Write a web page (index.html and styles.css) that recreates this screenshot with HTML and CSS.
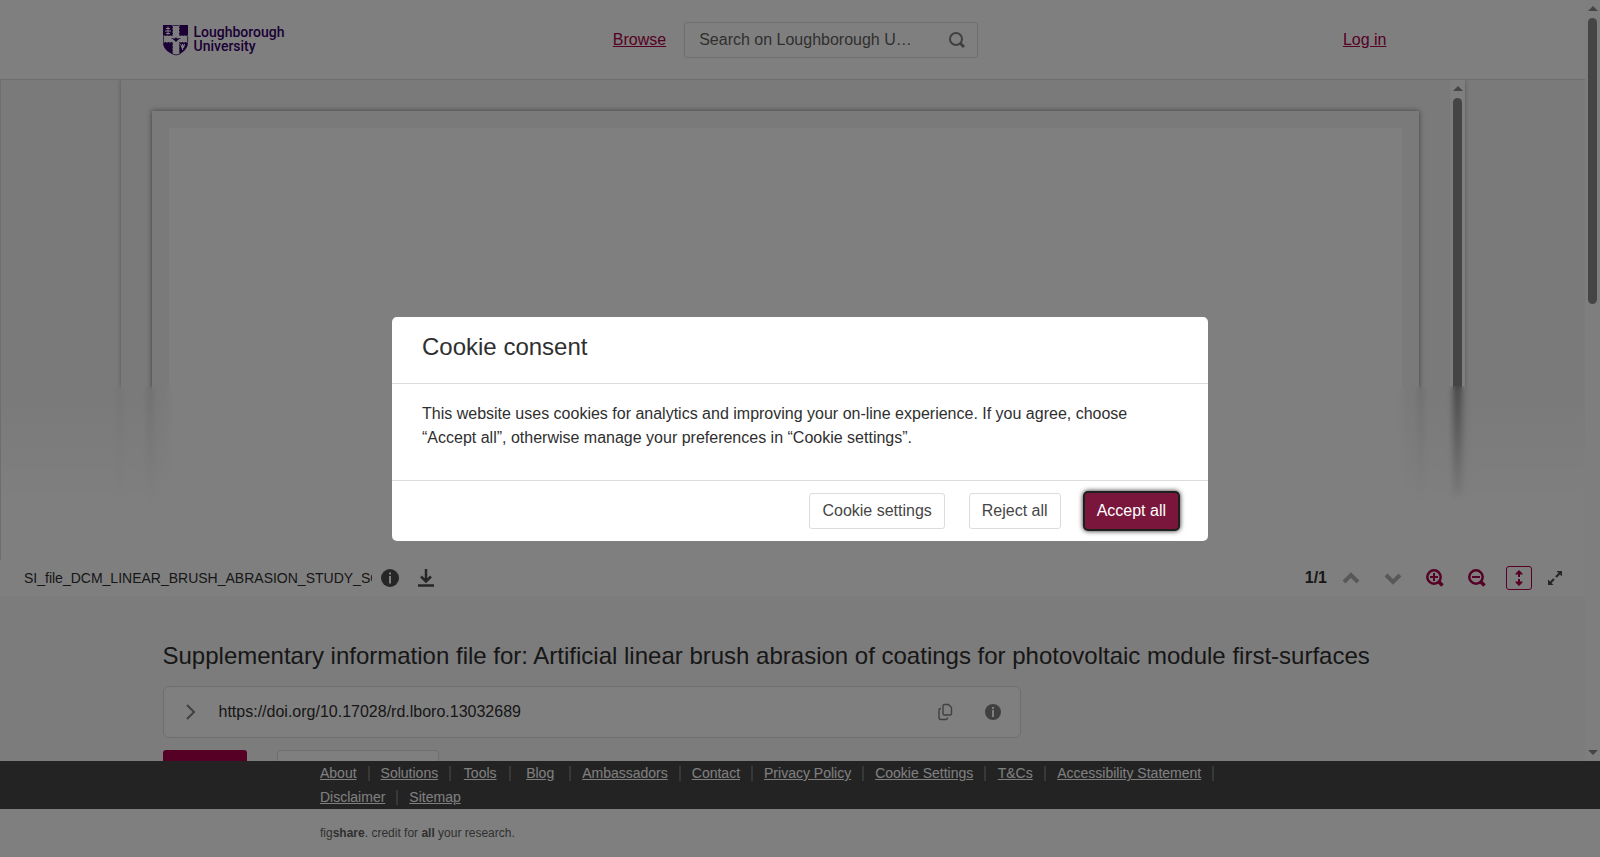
FILE: index.html
```html
<!DOCTYPE html>
<html lang="en">
<head>
    <meta charset="UTF-8">
    <meta name="viewport" content="width=device-width, initial-scale=1.0">
    <title>Supplementary information file for: Artificial linear brush abrasion of coatings for photovoltaic module first-surfaces</title>
    <link rel="stylesheet" href="styles.css">
</head>
<body>
    <div class="scroll-area">
        <div class="content">
            <!-- Header -->
            <header class="site-header">
                <div class="container header-grid">
                    <a href="#" class="logo">
                        <svg width="26" height="31" viewBox="0 0 26 31" aria-hidden="true">
                            <path fill="#36006b" d="M0 0h10v11H0zM16 0h9v11h-9zM0 17h10v12C4 27 0 23 0 17zM16 17h9c0 6-4 10-9 12z"/>
                            <path fill="none" stroke="#36006b" stroke-width="0.800" d="M10 .4h6M.4 11v6M24.600 11v6M8 28.500q5 3 10 0"/>
                            <path fill="none" stroke="#fff" stroke-width="0.600" stroke-dasharray="2 1" d="M9.700 0v10.700H0M16.300 0v10.700H25M0 17.300h9.700v12M25 17.300h-8.700v12"/>
                            <path fill="#36006b" d="M8 13l4 .5 1-1.500 1 1.500 4-.5-3 2-2 2-2-2z"/>
                            <path fill="none" stroke="#fff" stroke-width="1" d="M5 1.500v8M3 3.500h4M2 6h6M3 8.500h4M17.500 19l2 5 2-5M19.500 19v6M21.500 19l-1 4"/>
                        </svg>
                        <span class="logo-text">Loughborough<br>University</span>
                    </a>
                    <div class="header-middle">
                        <a href="#" class="link">Browse</a>
                        <form class="search">
                            <input type="text" aria-label="Search" placeholder="Search on Loughborough University">
                            <button type="button" aria-label="Submit search">
                                <svg width="16" height="16" viewBox="0 0 16 16" fill="none" stroke="#808080" stroke-width="2">
                                    <circle cx="7" cy="7" r="6"/>
                                    <path d="M11 11l4 4" stroke-width="3"/>
                                </svg>
                            </button>
                        </form>
                    </div>
                    <a href="#" class="link login">Log in</a>
                </div>
            </header>

            <!-- File viewer -->
            <section class="viewer">
                <div class="document">
                    <div class="document-view">
                        <div class="page">
                            <div class="sheet"></div>
                        </div>
                    </div>
                    <div class="scrollbar">
                        <div class="arrow-up"></div>
                        <div class="thumb"></div>
                    </div>
                </div>
                <div class="fade"></div>
            </section>
            <div class="toolbar">
                <span class="file-name">SI_file_DCM_LINEAR_BRUSH_ABRASION_STUDY_SOLAR_COATINGS.pdf</span>
                <button type="button" class="icon-button" aria-label="File info">
                    <svg width="18" height="18" viewBox="0 0 18 18">
                        <circle cx="9" cy="9" r="9" fill="#4d4d4d"/>
                        <path fill="#fff" d="M8 3.500h2v2H8zM8 7h2v7.500H8z"/>
                    </svg>
                </button>
                <button type="button" class="icon-button download" aria-label="Download">
                    <svg width="18" height="18" viewBox="0 0 18 18" fill="none" stroke="#4d4d4d" stroke-width="2.500">
                        <path d="M9 0v12M4 7.500l5 5 5-5M1 16.500h16"/>
                    </svg>
                </button>
                <div class="viewer-tools">
                    <b>1/1</b>
                    <button type="button" class="icon-button" aria-label="Previous page">
                        <svg width="18" height="18" viewBox="0 0 18 18" fill="none" stroke="#b0b0b0" stroke-width="4">
                            <path d="M2 13l7-7 7 7"/>
                        </svg>
                    </button>
                    <button type="button" class="icon-button" aria-label="Next page">
                        <svg width="18" height="18" viewBox="0 0 18 18" fill="none" stroke="#b0b0b0" stroke-width="4">
                            <path d="M2 6l7 7 7-7"/>
                        </svg>
                    </button>
                    <button type="button" class="icon-button" aria-label="Zoom in">
                        <svg width="18" height="18" viewBox="0 0 18 18" fill="none" stroke="#ab0048" stroke-width="2.500">
                            <circle cx="8" cy="8" r="6.700"/>
                            <path d="M8 4v8M4 8h8" stroke-width="2"/>
                            <path d="M12.500 12.500l4 4" stroke-width="3.500"/>
                        </svg>
                    </button>
                    <button type="button" class="icon-button" aria-label="Zoom out">
                        <svg width="18" height="18" viewBox="0 0 18 18" fill="none" stroke="#ab0048" stroke-width="2.500">
                            <circle cx="8" cy="8" r="6.700"/>
                            <path d="M4 8h8" stroke-width="2"/>
                            <path d="M12.500 12.500l4 4" stroke-width="3.500"/>
                        </svg>
                    </button>
                    <button type="button" class="icon-button fit" aria-label="Fit to height">
                        <svg width="8" height="18" viewBox="0 0 8 18" fill="#ab0048">
                            <path d="M4 1l3.500 3.500v1H5v2.500H3V5.500H.5v-1zM4 17l3.500-3.500v-1H5V10H3v2.500H.5v1z"/>
                        </svg>
                    </button>
                    <button type="button" class="icon-button expand" aria-label="Full screen">
                        <svg width="14" height="14" viewBox="0 0 14 14">
                            <path fill="#4d4d4d" d="M8.500 0H14v5.500l-2-2-3.300 3.300-1.500-1.500L10.500 2zM5.500 14H0V8.500l2 2 3.300-3.300 1.500 1.500L3.500 12z"/>
                        </svg>
                    </button>
                </div>
            </div>

            <!-- Item details -->
            <main class="container details">
                <h1>Supplementary information file for: Artificial linear brush abrasion of coatings for photovoltaic module first-surfaces</h1>
                <div class="doi-box">
                    <button type="button" class="icon-button" aria-label="Show citation">
                        <svg width="10" height="16" viewBox="0 0 10 16" fill="none" stroke="#808080" stroke-width="2">
                            <path d="M1 1l7 7-7 7"/>
                        </svg>
                    </button>
                    <span class="doi">https://doi.org/10.17028/rd.lboro.13032689</span>
                    <button type="button" class="icon-button" aria-label="Copy DOI">
                        <svg width="16" height="18" viewBox="0 0 16 18" fill="none" stroke="#808080" stroke-width="1.400">
                            <path d="M7.500 1.500h4l3 3v6q0 1.500-1.500 1.500H7.500Q6 12 6 10.500V3q0-1.500 1.500-1.500zM4 5.500q-2 0-2 2V14.500q0 2 2 2h5q1.500 0 1.500-2"/>
                        </svg>
                    </button>
                    <button type="button" class="icon-button" aria-label="DOI info">
                        <svg width="16" height="16" viewBox="0 0 16 16">
                            <circle cx="8" cy="8" r="8" fill="#808080"/>
                            <path fill="#fff" d="M7 3h2v2H7zM7 6h2v7H7z"/>
                        </svg>
                    </button>
                </div>
                <div class="actions">
                    <button type="button" class="action primary" aria-label="Cite"></button>
                    <button type="button" class="action" aria-label="Download all"></button>
                </div>
            </main>
        </div>
        <div class="scrollbar">
            <div class="arrow-up"></div>
            <div class="thumb"></div>
            <div class="arrow-down"></div>
        </div>
    </div>

    <!-- Footer -->
    <footer>
        <div class="footer-links">
            <ul>
                <li><a href="#">About</a></li>
                <li><a href="#">Solutions</a></li>
                <li><a href="#">Tools</a></li>
                <li><a href="#">Blog</a></li>
                <li><a href="#">Ambassadors</a></li>
                <li><a href="#">Contact</a></li>
                <li><a href="#">Privacy Policy</a></li>
                <li><a href="#">Cookie Settings</a></li>
                <li><a href="#">T&amp;Cs</a></li>
                <li><a href="#">Accessibility Statement</a></li>
                <li><a href="#">Disclaimer</a></li>
                <li><a href="#">Sitemap</a></li>
            </ul>
        </div>
        <p class="credit">fig<b>share</b>. credit for <b>all</b> your research.</p>
    </footer>

    <!-- Cookie consent -->
    <div class="overlay">
        <div class="modal" role="dialog" aria-labelledby="cookie-title">
            <h2 id="cookie-title">Cookie consent</h2>
            <p>This website uses cookies for analytics and improving your on-line experience. If you agree, choose “Accept all”, otherwise manage your preferences in “Cookie settings”.</p>
            <div class="modal-footer">
                <button type="button">Cookie settings</button>
                <button type="button">Reject all</button>
                <button type="button" class="accept">Accept all</button>
            </div>
        </div>
    </div>
</body>
</html>
```

FILE: styles.css
```css
* {
    box-sizing: border-box;
}

body {
    font-family: "Liberation Sans", Arial, sans-serif;
    font-size: 16px;
    line-height: 24px;
    color: #2f2f2f;
    margin: 0;
    height: 100vh;
    display: flex;
    flex-direction: column;
    background-color: #fff;
}

button, input {
    font-family: inherit;
    font-size: 16px;
}

svg {
    display: block;
}

.scroll-area {
    flex: 1;
    min-height: 0;
    display: flex;
}

.content {
    flex: 1;
    min-width: 0;
    overflow: hidden;
    background-color: #f8f8f8;
}

.container {
    max-width: 1260px;
    margin: 0 auto;
}

.link {
    color: #ab0048;
    text-decoration: underline;
}

/* Scrollbars */
.scrollbar {
    width: 15px;
    flex-shrink: 0;
    padding: 6px 0;
    background-color: #fcfcfc;
    display: flex;
    flex-direction: column;
    align-items: center;
}

.arrow-up, .arrow-down {
    border: 5px solid transparent;
    border-top-width: 0;
    border-bottom: 5px solid #8b8b8b;
}

.arrow-down {
    border-bottom-width: 0;
    border-top: 5px solid #8b8b8b;
    margin-top: auto;
}

.thumb {
    width: 9px;
    height: 286px;
    margin-top: 7px;
    border-radius: 5px;
    background-color: #8b8b8b;
}

/* Header */
.site-header {
    height: 80px;
    background-color: #fff;
    border-bottom: 1px solid #dcdcdc;
}

.header-grid {
    height: 79px;
    display: grid;
    grid-template-columns: 1fr auto 1fr;
    align-items: center;
}

.logo {
    display: flex;
    gap: 5px;
    padding-top: 2px;
    color: #36006b;
    text-decoration: none;
}

.logo-text {
    font-family: Roboto, sans-serif;
    font-size: 14px;
    font-weight: 500;
    line-height: 14px;
}

.header-middle {
    display: flex;
    align-items: center;
    gap: 18px;
    padding-left: 6px;
}

.search {
    width: 294px;
    height: 36px;
    padding: 0 12px 0 14px;
    border: 1px solid #dcdcdc;
    border-radius: 3px;
    display: flex;
    align-items: center;
}

.search input {
    flex: 1;
    min-width: 0;
    padding: 0;
    border: none;
    background: none;
    text-overflow: ellipsis;
}

.search input::placeholder {
    color: #5f5f5f;
}

.search button {
    width: 50px;
    padding: 0;
    border: none;
    background: none;
    display: flex;
    justify-content: flex-end;
}

.login {
    justify-self: end;
    margin-right: 36px;
}

/* File viewer */
.viewer {
    position: relative;
    height: 480px;
    border-left: 1px solid #dcdcdc;
    background-color: #f4f4f4;
    overflow: hidden;
}

.document {
    height: 100%;
    margin: 0 120px;
    display: flex;
    box-shadow: 0 0 4px rgba(0, 0, 0, 0.3);
}

.document-view {
    flex: 1;
    padding: 31px 31px 0;
}

.page {
    height: 100%;
    padding: 17px 17px 0;
    background-color: #f4f4f4;
    box-shadow: 0 0 5px rgba(0, 0, 0, 0.5);
}

.sheet {
    height: 100%;
    background-color: #fff;
}

.document .thumb {
    height: 400px;
}

/* Blurs the lower part of the preview out to white */
.fade {
    position: absolute;
    left: 0;
    right: 0;
    top: 306px;
    bottom: 0;
    background: linear-gradient(rgba(255, 255, 255, 0), #fff 72%);
    backdrop-filter: blur(3px);
}

.toolbar {
    height: 36px;
    padding: 0 23px 0 24px;
    background-color: #fff;
    display: flex;
    align-items: center;
}

.file-name {
    width: 348px;
    margin-right: 9px;
    font-size: 14px;
    white-space: nowrap;
    overflow: hidden;
}

.icon-button {
    padding: 0;
    border: none;
    background: none;
}

.download {
    margin-left: 18px;
}

.viewer-tools {
    margin-left: auto;
    display: flex;
    align-items: center;
    gap: 24px;
}

.viewer-tools b {
    margin-right: -9px;
}

.fit {
    width: 26px;
    height: 24px;
    margin-left: -4px;
    margin-right: -8px;
    border: 1px solid #ab0048;
    border-radius: 3px;
    display: flex;
    align-items: center;
    justify-content: center;
}

/* Item details */
.details {
    padding-top: 44px;
}

.details h1 {
    margin: 0;
    font-size: 24px;
    font-weight: normal;
    line-height: 32px;
}

.doi-box {
    max-width: 858px;
    height: 52px;
    margin-top: 14px;
    padding: 0 19px 0 22px;
    background-color: #fff;
    border: 1px solid #dcdcdc;
    border-radius: 6px;
    display: flex;
    align-items: center;
}

.doi {
    flex: 1;
    margin-left: 23px;
}

.doi-box .icon-button:last-child {
    margin-left: 32px;
}

.actions {
    margin-top: 12px;
    display: flex;
    gap: 30px;
}

.action {
    width: 162px;
    height: 36px;
    border: 1px solid #dcdcdc;
    border-radius: 3px;
    background-color: #fff;
}

.action.primary {
    width: 84px;
    border: none;
    background-color: #ab0048;
}

/* Footer */
.footer-links {
    background-color: #464646;
}

.footer-links ul {
    list-style-type: none;
    max-width: 982px;
    margin: 0 auto;
    padding: 0;
    display: flex;
    flex-wrap: wrap;
}

.footer-links li {
    min-width: 60px;
    height: 15px;
    margin: 5px 0 4px;
    padding: 0 11px;
    border-right: 2px solid #707070;
    font-size: 14px;
    line-height: 15px;
    text-align: center;
}

.footer-links li:last-child {
    border-right: none;
}

.footer-links a {
    color: #fff;
}

.credit {
    max-width: 960px;
    margin: 0 auto;
    font-size: 12px;
    line-height: 48px;
    color: #5f5f5f;
}

/* Cookie consent */
.overlay {
    position: fixed;
    inset: 0;
    background-color: rgba(0, 0, 0, 0.5);
    display: flex;
    align-items: center;
    justify-content: center;
}

.modal {
    width: 816px;
    max-width: 100%;
    background-color: #fff;
    border-radius: 5px;
}

.modal h2 {
    margin: 0;
    padding: 14px 30px 20px;
    font-size: 24px;
    font-weight: normal;
    line-height: 32px;
}

.modal p {
    margin: 0;
    padding: 18px 30px 30px;
    border-top: 1px solid #dcdcdc;
    border-bottom: 1px solid #dcdcdc;
}

.modal-footer {
    padding: 12px 30px;
    display: flex;
    justify-content: flex-end;
    gap: 24px;
}

.modal-footer button {
    height: 36px;
    padding: 0 12px;
    border: 1px solid #dcdcdc;
    border-radius: 3px;
    background-color: #fff;
    color: #464646;
}

.modal-footer .accept {
    border: none;
    background-color: #7a163c;
    color: #fff;
    box-shadow: 0 0 0 2px #1f1f1f, 0 0 5px 2px #1f1f1f;
}
```
